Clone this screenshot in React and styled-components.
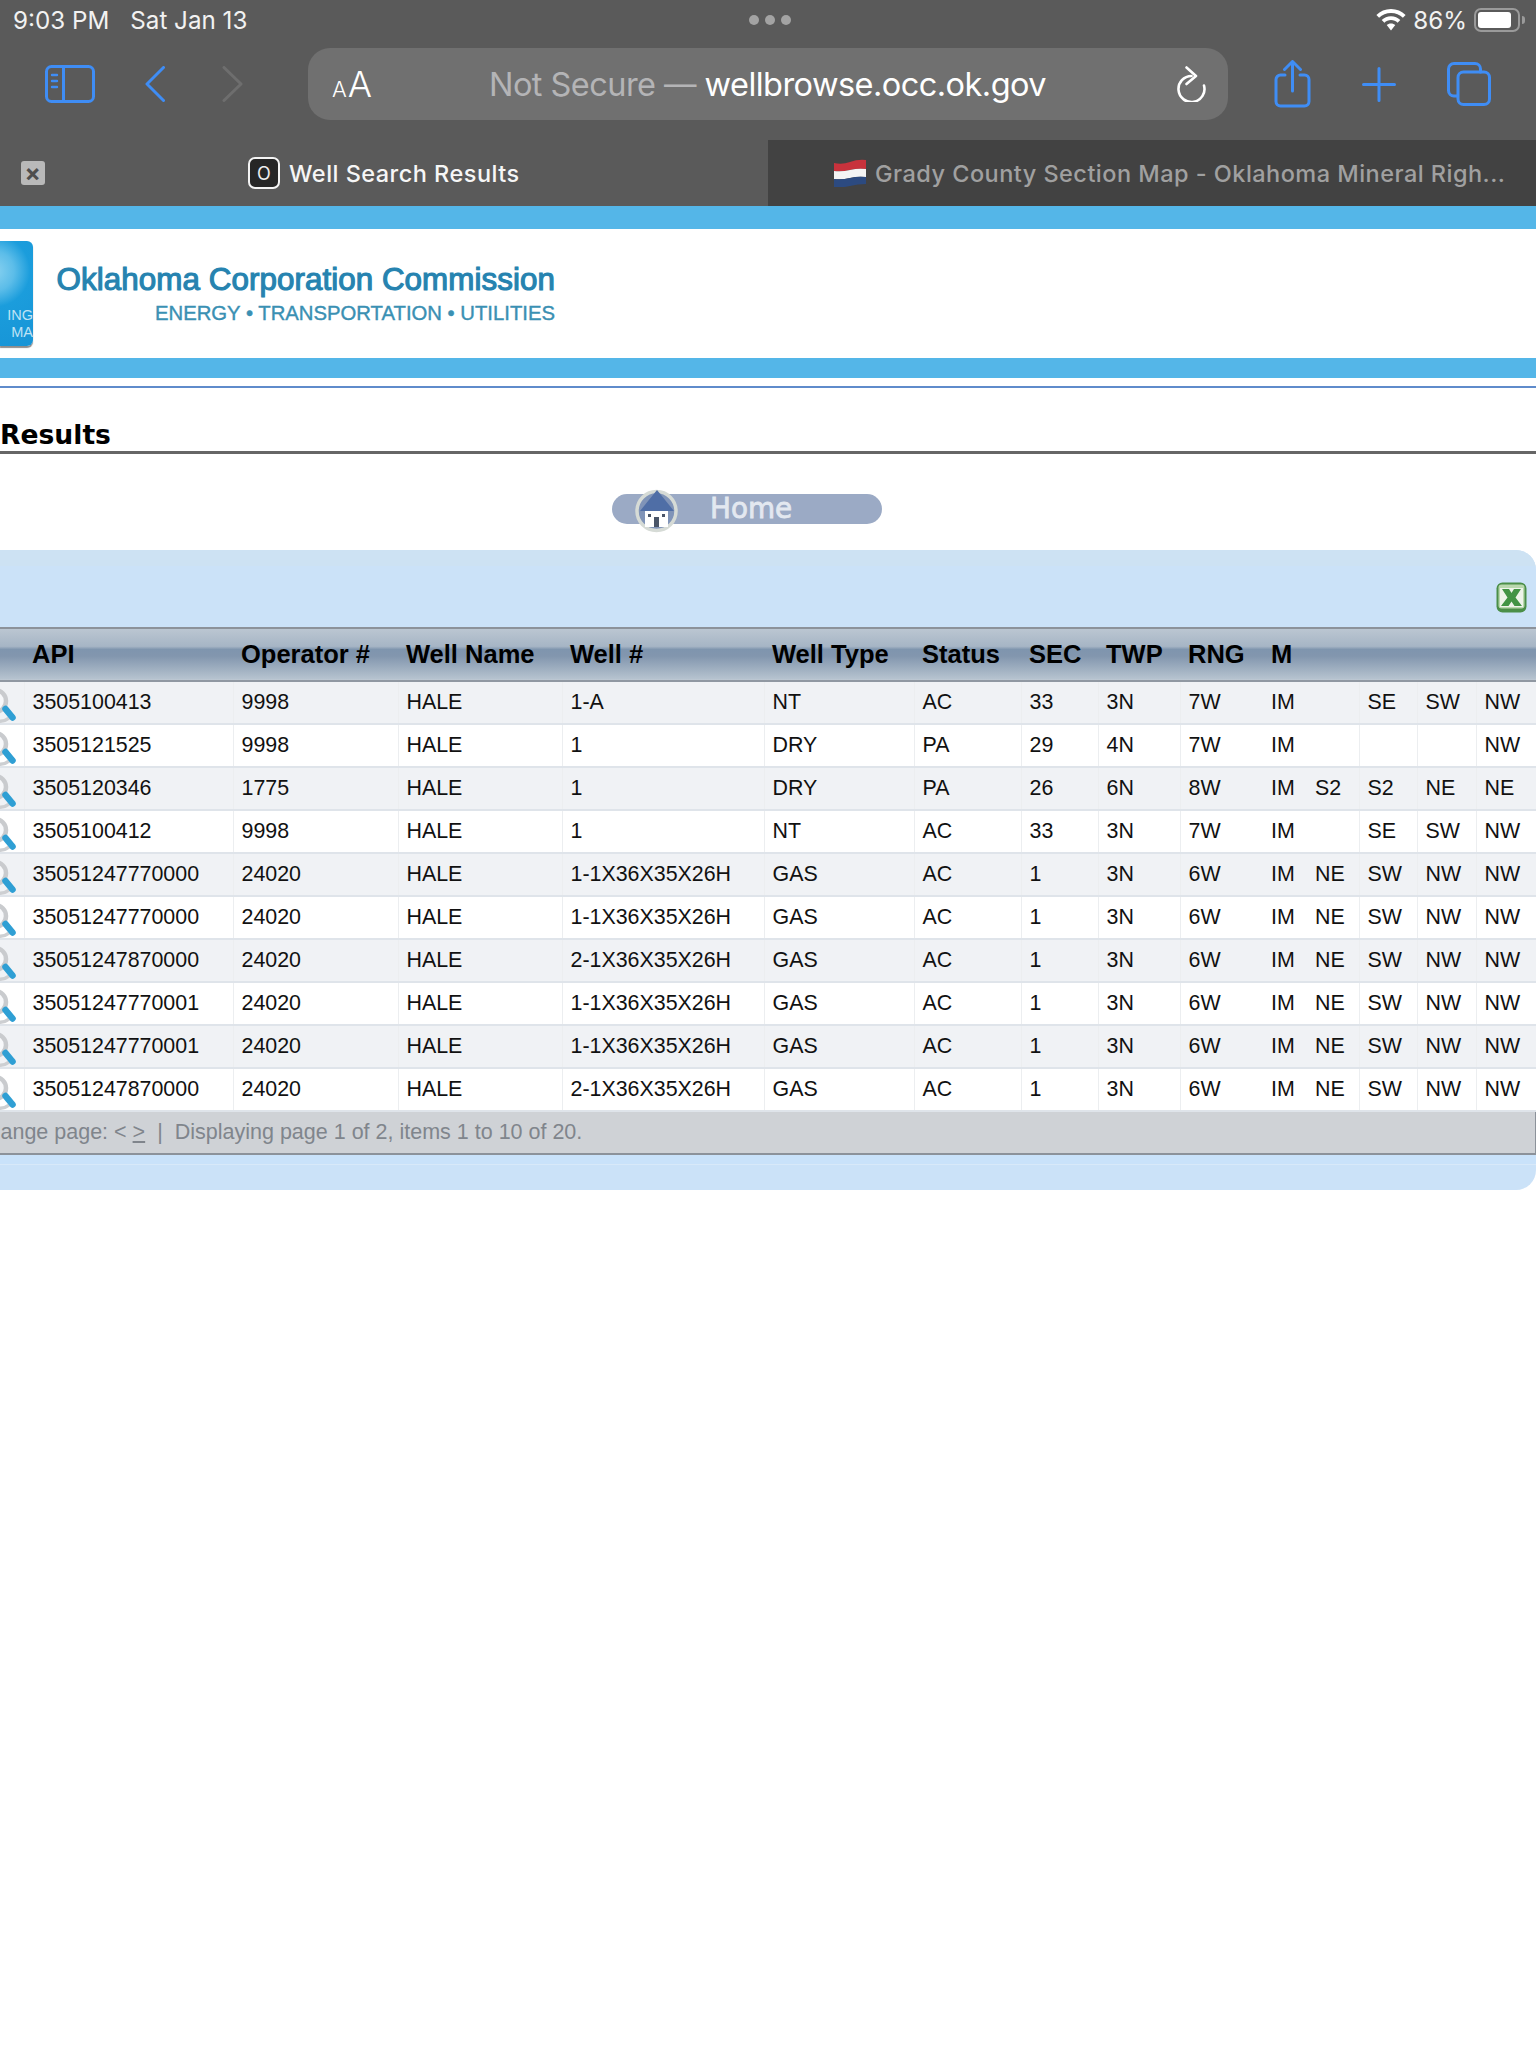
import React from "react";
import styled, { createGlobalStyle } from "styled-components";

const Global = createGlobalStyle`
  html, body { margin: 0; padding: 0; background: #fff; }
  body { font-family: "Liberation Sans", Arial, sans-serif; overflow-x: hidden; }
  * { box-sizing: border-box; }
`;

const Page = styled.div`
  width: 1536px;
  min-height: 2048px;
  background: #fff;
  overflow: hidden;
`;

/* ---------- browser chrome ---------- */
const Chrome = styled.header`
  height: 206px;
  background: #5a5a5a;
  display: flex;
  flex-direction: column;
  font-family: Inter, "Liberation Sans", sans-serif;
`;
const StatusBar = styled.div`
  height: 40px;
  display: grid;
  grid-template-columns: 1fr auto 1fr;
  align-items: center;
  padding: 0 10px 0 13px;
  color: #f2f2f2;
  font-size: 24.2px;
`;
const StatusLeft = styled.div`
  display: flex;
  gap: 21px;
`;
const Dots = styled.div`
  display: flex;
  gap: 6px;
`;
const Dot = styled.span`
  width: 10px;
  height: 10px;
  border-radius: 50%;
  background: #a3a3a3;
`;
const StatusRight = styled.div`
  display: flex;
  justify-content: flex-end;
  align-items: center;
  gap: 7px;
`;
const Battery = styled.div`
  width: 46px;
  height: 24px;
  margin-right: 6px;
  border: 2px solid #9a9a9a;
  border-radius: 7px;
  padding: 2px;
  position: relative;
  &::after {
    content: "";
    position: absolute;
    right: -7px;
    top: 6px;
    width: 3px;
    height: 8px;
    border-radius: 0 3px 3px 0;
    background: #9a9a9a;
  }
`;
const BatteryFill = styled.div`
  width: 86%;
  height: 100%;
  background: #fff;
  border-radius: 3px;
`;
const Toolbar = styled.div`
  height: 88px;
  margin-bottom: 12px;
  padding-left: 45px;
  display: flex;
  align-items: center;
`;
const ToolIcon = styled.svg`
  flex: none;
  display: block;
  margin-left: ${(p) => p.$gap || 0}px;
  fill: none;
  stroke: ${(p) => p.$color || "#3f8df5"};
  stroke-width: ${(p) => p.$sw || 3};
  stroke-linecap: round;
  stroke-linejoin: round;
`;
const AddressBar = styled.div`
  width: 920px;
  height: 72px;
  margin-left: 65px;
  border-radius: 22px;
  background: #707070;
  display: flex;
  align-items: center;
  padding: 0 22px 0 24px;
  color: #fff;
`;
const AaMark = styled.div`
  width: 157px;
  flex: none;
  display: flex;
  align-items: baseline;
  font-size: 36px;
  line-height: 1;
  font-weight: 300;
`;
const SmallA = styled.span`
  font-size: 22px;
  margin-right: 1px;
`;
const Url = styled.div`
  flex: 1;
  font-size: 32.5px;
  font-weight: 400;
  letter-spacing: -0.55px;
  white-space: nowrap;
  color: #fff;
`;
const UrlHint = styled.span`
  color: #b4b4b6;
`;
const TabRow = styled.div`
  flex: 1;
  display: grid;
  grid-template-columns: 1fr 1fr;
`;
const ActiveTab = styled.div`
  display: flex;
  align-items: center;
  padding-left: 21px;
  color: #f6f6f6;
  font-size: 23.5px;
  font-weight: 500;
  letter-spacing: 0.47px;
`;
const InactiveTab = styled.div`
  display: flex;
  align-items: center;
  padding-left: 66px;
  gap: 9px;
  background: #424242;
  color: #a0a0a0;
  font-size: 23.5px;
  font-weight: 500;
  letter-spacing: 0.47px;
  white-space: nowrap;
`;
const CloseBox = styled.div`
  width: 24px;
  height: 24px;
  border-radius: 3px;
  background: #b9b9b9;
  color: #4e4e4e;
  font-size: 24px;
  line-height: 24px;
  font-weight: 700;
  display: flex;
  align-items: center;
  justify-content: center;
`;
const Favicon = styled.div`
  width: 32px;
  height: 32px;
  margin: 0 9px 0 203px;
  border: 2px solid #f4f4f4;
  border-radius: 7px;
  background: #262626;
  color: #eee;
  font-size: 18px;
  font-weight: 400;
  letter-spacing: 0;
  display: flex;
  align-items: center;
  justify-content: center;
`;

/* ---------- site banner ---------- */
const BlueBar = styled.div`
  height: ${(p) => p.$h}px;
  background: #54b6e8;
`;
const LogoBand = styled.div`
  height: 129px;
  display: flex;
  align-items: center;
  background: #fff;
`;
const LogoMark = styled.div`
  width: 33px;
  height: 105px;
  border-radius: 0 6px 6px 0;
  background: radial-gradient(circle at -6px 30px, #8ad2f0 0, #5cbde9 20px, #1b9ddc 36px, #1794d6 100%);
  box-shadow: 0 2px 1px #8d8d8d;
  color: #bfe3f5;
  font-size: 14.5px;
  line-height: 17px;
  padding: 66px 0 0 0;
  display: flex;
  flex-direction: column;
  align-items: flex-end;
`;
const LogoCopy = styled.div`
  width: 498px;
  margin-left: 24px;
  display: flex;
  flex-direction: column;
  align-items: flex-end;
`;
const LogoTitle = styled.div`
  font-size: 31.4px;
  line-height: 36px;
  font-weight: 400;
  letter-spacing: 0.04px;
  color: #2683b0;
  white-space: nowrap;
  -webkit-text-stroke: 1px #2683b0;
  text-shadow: 0 0 1px #7ab8d4;
`;
const LogoSub = styled.div`
  margin-top: 3px;
  font-size: 20.3px;
  line-height: 24px;
  color: #3a90b3;
  white-space: nowrap;
  -webkit-text-stroke: 0.4px #3a90b3;
`;
const PageRule = styled.div`
  height: 2px;
  margin-top: 8px;
  background: #5f8bcb;
`;
const Heading = styled.h1`
  height: 66px;
  margin: 0;
  padding-top: 29px;
  border-bottom: 3px solid #666;
  font: 700 26.6px/36px "DejaVu Sans", sans-serif;
  color: #000;
`;
const HomeRow = styled.div`
  height: 96px;
  padding: 40px 0 0 612px;
`;
const HomeButton = styled.div`
  width: 270px;
  height: 30px;
  border-radius: 15px;
  background: #9baac5;
  display: flex;
  align-items: center;
  padding-left: 21px;
  color: #e3e8f0;
  font: 400 27.8px/30px "DejaVu Sans", sans-serif;
  -webkit-text-stroke: 0.8px #e3e8f0;
`;
const HomeIcon = styled.svg`
  flex: none;
  width: 46px;
  height: 46px;
  margin-right: 31px;
  overflow: visible;
`;

/* ---------- results ---------- */
const Panel = styled.section`
  height: 640px;
  border-radius: 0 20px 20px 0;
  background: #cbe2f8;
  overflow: hidden;
`;
const PanelTools = styled.div`
  height: 77px;
  padding-top: 32px;
  padding-right: 9px;
  display: flex;
  justify-content: flex-end;
  background: linear-gradient(#cde2f3 0 16px, #cbe2f8 16px);
`;
const Table = styled.table`
  width: 1536px;
  table-layout: fixed;
  border-collapse: collapse;
  border-top: 2px solid #8c929a;
  border-right: 1px solid #8c929a;
  font-size: 21.4px;
  color: #111;
`;
const HeadRow = styled.tr`
  height: 53px;
  background: linear-gradient(#bcc7d2 0, #a6b5c5 36%, #7f95ae 42%, #8296ae 55%, #b6c3cf 100%);
  border-bottom: 2px solid #9098a2;
`;
const HeadCell = styled.th`
  padding: 0 0 1px 8px;
  text-align: left;
  font-size: 25.5px;
  font-weight: 700;
  color: #000;
  white-space: nowrap;
  overflow: visible;
`;
const Row = styled.tr`
  height: 43px;
  background: ${(p) => (p.$odd ? "#f0f2f5" : "#fff")};
  border-bottom: 2px solid #dfe4ea;
`;
const Cell = styled.td`
  padding: 0 0 0 ${(p) => (p.$icon ? 0 : 8)}px;
  border-left: ${(p) => (p.$bare ? "none" : "1px solid #eceef0")};
  white-space: nowrap;
  overflow: ${(p) => (p.$icon ? "hidden" : "visible")};
  vertical-align: middle;
`;
const Lens = styled.svg`
  display: block;
  width: 24px;
  height: 41px;
`;
const Pager = styled.div`
  height: 43px;
  text-indent: -27px;
  border-right: 1px solid #8c929a;
  border-bottom: 2px solid #8c929a;
  background: #cfd2d6;
  color: #80858c;
  font-size: 21.5px;
  line-height: 40px;
  white-space: nowrap;
`;
const PagerDivider = styled.span`
  margin: 0 12px;
`;
const PagerLink = styled.span`
  text-decoration: underline;
`;
const PanelFoot = styled.div`
  height: 10px;
  border-bottom: 1px solid #d8e9f9;
  background: #c9e2fa;
`;

const columns = [24, 209, 165, 164, 202, 150, 107, 77, 82, 83, 44, 52, 58, 59, 60];
const headers = ["", "API", "Operator #", "Well Name", "Well #", "Well Type", "Status", "SEC", "TWP", "RNG", "M", "", "", "", ""];
const rows = [
  ["3505100413", "9998", "HALE", "1-A", "NT", "AC", "33", "3N", "7W", "IM", "", "SE", "SW", "NW"],
  ["3505121525", "9998", "HALE", "1", "DRY", "PA", "29", "4N", "7W", "IM", "", "", "", "NW"],
  ["3505120346", "1775", "HALE", "1", "DRY", "PA", "26", "6N", "8W", "IM", "S2", "S2", "NE", "NE"],
  ["3505100412", "9998", "HALE", "1", "NT", "AC", "33", "3N", "7W", "IM", "", "SE", "SW", "NW"],
  ["35051247770000", "24020", "HALE", "1-1X36X35X26H", "GAS", "AC", "1", "3N", "6W", "IM", "NE", "SW", "NW", "NW"],
  ["35051247770000", "24020", "HALE", "1-1X36X35X26H", "GAS", "AC", "1", "3N", "6W", "IM", "NE", "SW", "NW", "NW"],
  ["35051247870000", "24020", "HALE", "2-1X36X35X26H", "GAS", "AC", "1", "3N", "6W", "IM", "NE", "SW", "NW", "NW"],
  ["35051247770001", "24020", "HALE", "1-1X36X35X26H", "GAS", "AC", "1", "3N", "6W", "IM", "NE", "SW", "NW", "NW"],
  ["35051247770001", "24020", "HALE", "1-1X36X35X26H", "GAS", "AC", "1", "3N", "6W", "IM", "NE", "SW", "NW", "NW"],
  ["35051247870000", "24020", "HALE", "2-1X36X35X26H", "GAS", "AC", "1", "3N", "6W", "IM", "NE", "SW", "NW", "NW"],
];

const MagnifierIcon = () => (
  <Lens viewBox="0 0 24 41">
    <circle cx="-5" cy="19" r="11" fill="#f7f8fa" stroke="#c9cbce" strokeWidth="4.5" />
    <path d="M-2 39 Q 4 40 9 36" fill="none" stroke="#cdcfd2" strokeWidth="3.5" />
    <path d="M5.5 27 L 12.5 35.5" stroke="#2f9fd4" strokeWidth="6.5" strokeLinecap="round" />
  </Lens>
);

const ExcelIcon = () => (
  <svg width="31" height="31" viewBox="0 0 31 31">
    <rect x="0.5" y="0.5" width="30" height="30" rx="6" fill="#4b8f48" />
    <rect x="2.5" y="2.5" width="26" height="24" rx="3" fill="#b9d8ae" />
    <rect x="4" y="6" width="23" height="19" fill="#eef4ea" />
    <path d="M6 7 H13 L15.5 11 L18 7 H25 L19.5 15.5 L26 24 H18.5 L15.5 19.5 L12.5 24 H5 L11.5 15.5 Z" fill="#439445" />
  </svg>
);

export default function App() {
  return (
    <Page>
      <Global />
      <Chrome>
        <StatusBar>
          <StatusLeft>
            <span>9:03 PM</span>
            <span>Sat Jan 13</span>
          </StatusLeft>
          <Dots>
            <Dot />
            <Dot />
            <Dot />
          </Dots>
          <StatusRight>
            <svg width="30" height="22" viewBox="0 0 30 22" fill="#fff">
              <path d="M15 0C9.3 0 4.2 2.2 .4 5.9l2.7 2.8C6.2 5.7 10.4 3.9 15 3.9s8.8 1.8 11.9 4.8l2.7-2.8C25.8 2.2 20.7 0 15 0z" />
              <path d="M15 7.2c-3.6 0-6.9 1.4-9.3 3.7l2.7 2.8c1.7-1.6 4-2.7 6.6-2.7s4.9 1 6.6 2.7l2.7-2.8C21.9 8.6 18.6 7.2 15 7.2z" />
              <path d="M15 14.4c-1.7 0-3.2.7-4.3 1.7L15 21.5l4.3-5.4c-1.1-1-2.6-1.7-4.3-1.7z" />
            </svg>
            <span>86%</span>
            <Battery>
              <BatteryFill />
            </Battery>
          </StatusRight>
        </StatusBar>
        <Toolbar>
          <ToolIcon width="50" height="38" viewBox="0 0 50 38">
            <rect x="1.5" y="1.5" width="47" height="35" rx="5" />
            <path d="M18.5 2V36" />
            <path d="M7 10H12M7 16H12M7 22H12" strokeWidth="2.4" />
          </ToolIcon>
          <ToolIcon $gap={50} width="20" height="36" viewBox="0 0 20 36">
            <path d="M18.5 1.5L2 18L18.5 34.5" />
          </ToolIcon>
          <ToolIcon $gap={57} $color="#6e6e6e" width="21" height="36" viewBox="0 0 21 36">
            <path d="M2 1.5L19 18L2 34.5" />
          </ToolIcon>
          <AddressBar>
            <AaMark>
              <SmallA>A</SmallA>A
            </AaMark>
            <Url>
              <UrlHint>Not Secure — </UrlHint>wellbrowse.occ.ok.gov
            </Url>
            <ToolIcon $color="#fff" $sw={2.6} width="30" height="36" viewBox="0 0 30 36">
              <path d="M15.5 10A13 13 0 1 0 28 19.5" />
              <path d="M10.5 1.5L20 10L10.5 18" />
            </ToolIcon>
          </AddressBar>
          <ToolIcon $gap={46} width="37" height="48" viewBox="0 0 37 48">
            <path d="M11 15H6.5A4.5 4.5 0 0 0 2 19.5V41.5A4.5 4.5 0 0 0 6.5 46H30.5A4.5 4.5 0 0 0 35 41.5V19.5A4.5 4.5 0 0 0 30.5 15H26" />
            <path d="M18.5 31V2M10.5 9.5L18.5 1.5L26.5 9.5" />
          </ToolIcon>
          <ToolIcon $gap={51} width="34" height="35" viewBox="0 0 34 35">
            <path d="M17 1.5V33.5M1.5 17.5H32.5" />
          </ToolIcon>
          <ToolIcon $gap={51} width="44" height="44" viewBox="0 0 44 44">
            <path d="M10 34H7A5.5 5.5 0 0 1 1.5 28.5V7A5.5 5.5 0 0 1 7 1.5H28A5.5 5.5 0 0 1 33.5 7V10" />
            <rect x="11" y="10" width="31.5" height="32.5" rx="5.5" />
          </ToolIcon>
        </Toolbar>
        <TabRow>
          <ActiveTab>
            <CloseBox>×</CloseBox>
            <Favicon>O</Favicon>
            Well Search Results
          </ActiveTab>
          <InactiveTab>
            <svg width="32" height="28" viewBox="0 0 32 28">
              <path d="M0 4Q8 6 16 3T32 1V10Q24 9 16 11T0 12Z" fill="#c8323c" />
              <path d="M0 12Q8 13 16 11T32 10V18Q24 17 16 19T0 20Z" fill="#f4f4f4" />
              <path d="M0 20Q8 21 16 19T32 18V25Q24 25 16 27T0 28Z" fill="#2c4a80" />
            </svg>
            Grady County Section Map - Oklahoma Mineral Righ...
          </InactiveTab>
        </TabRow>
      </Chrome>

      <BlueBar $h={23} />
      <LogoBand>
        <LogoMark>
          <span>ING</span>
          <span>MA</span>
        </LogoMark>
        <LogoCopy>
          <LogoTitle>Oklahoma Corporation Commission</LogoTitle>
          <LogoSub>ENERGY • TRANSPORTATION • UTILITIES</LogoSub>
        </LogoCopy>
      </LogoBand>
      <BlueBar $h={20} />
      <PageRule />

      <Heading>Results</Heading>
      <HomeRow>
        <HomeButton>
          <HomeIcon viewBox="0 0 46 46">
            <circle cx="23.5" cy="25" r="19.5" fill="#8094b8" stroke="#d6dbd6" strokeWidth="3.5" />
            <path d="M24 4L41 25H7Z" fill="#4f6ea6" />
            <rect x="12" y="25" width="23" height="16" fill="#fff" />
            <rect x="21" y="31" width="5" height="10" fill="#4a5568" />
            <rect x="15" y="28" width="3" height="3" fill="#4a5568" />
            <rect x="29" y="28" width="3" height="3" fill="#4a5568" />
          </HomeIcon>
          Home
        </HomeButton>
      </HomeRow>

      <Panel>
        <PanelTools>
          <ExcelIcon />
        </PanelTools>
        <Table>
          <colgroup>
            {columns.map((w, i) => (
              <col key={i} width={w} />
            ))}
          </colgroup>
          <thead>
            <HeadRow>
              {headers.map((h, i) => (
                <HeadCell key={i}>{h}</HeadCell>
              ))}
            </HeadRow>
          </thead>
          <tbody>
            {rows.map((r, i) => (
              <Row key={i} $odd={i % 2 === 0}>
                <Cell $icon $bare>
                  <MagnifierIcon />
                </Cell>
                {r.map((v, j) => (
                  <Cell key={j} $bare={j === 9 || j === 10}>
                    {v}
                  </Cell>
                ))}
              </Row>
            ))}
          </tbody>
        </Table>
        <Pager>
          Change page: &lt; <PagerLink>&gt;</PagerLink>
          <PagerDivider>|</PagerDivider>
          Displaying page 1 of 2, items 1 to 10 of 20.
        </Pager>
        <PanelFoot />
      </Panel>
    </Page>
  );
}
